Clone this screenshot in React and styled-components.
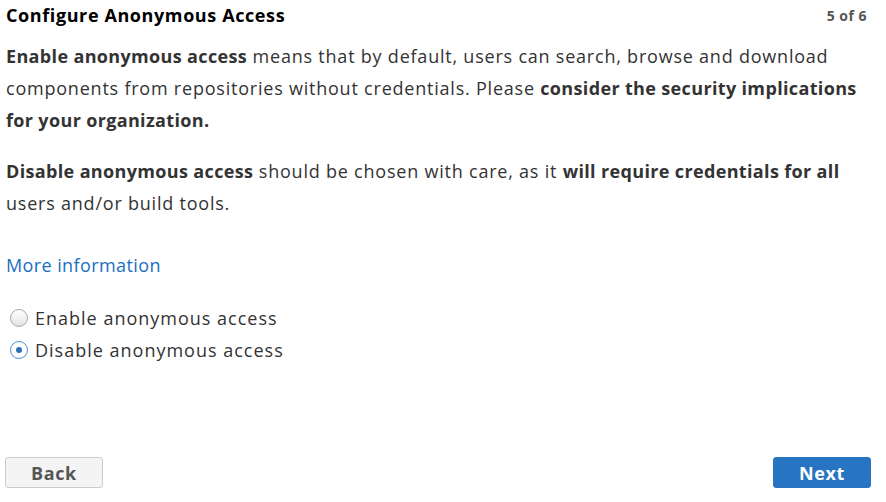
import React from "react";
import styled, { createGlobalStyle } from "styled-components";

const Global = createGlobalStyle`
  html, body { margin: 0; padding: 0; background: #fff; }
  body { font-family: "Open Sans", Lato, sans-serif; color: #333; }
`;

const Page = styled.div`
  height: 502px;
  box-sizing: border-box;
  padding: 3px 15px 14px 6px;
  display: flex;
  flex-direction: column;
`;

const Header = styled.div`
  display: flex;
  justify-content: space-between;
  align-items: center;
  height: 24px;
`;

const Title = styled.h1`
  margin: 0;
  font-size: 18px;
  font-weight: 700;
  letter-spacing: 0.6px;
  color: #000;
`;

const Step = styled.span`
  font-size: 14px;
  font-weight: 700;
  letter-spacing: 0.5px;
  color: #555;
  padding-right: 4px;
`;

const Para = styled.p`
  margin: ${(p) => p.$top}px 0 0;
  font-size: 18px;
  letter-spacing: 0.78px;
  line-height: 32px;
  color: #333;
  white-space: nowrap;
  b { font-weight: 700; letter-spacing: 0.35px; }
`;

const Link = styled.a`
  display: block;
  margin-top: 30px;
  font-size: 18px;
  letter-spacing: 0.4px;
  line-height: 32px;
  color: #1a6fbf;
  text-decoration: none;
`;

const Options = styled.div`
  margin-top: 21px;
  display: flex;
  flex-direction: column;
`;

const Option = styled.label`
  display: flex;
  align-items: center;
  height: 32px;
  font-size: 18px;
  letter-spacing: 1px;
  color: #333;
  gap: 7px;
`;

const Radio = styled.span`
  width: 18px;
  height: 18px;
  margin-left: 4px;
  border-radius: 50%;
  box-sizing: border-box;
  border: 1px solid ${(p) => (p.$checked ? "#4a90d9" : "#aaa")};
  background: ${(p) => (p.$checked ? "#fff" : "linear-gradient(#fff, #e3e3e3)")};
  display: flex;
  align-items: center;
  justify-content: center;
  &::after {
    content: "";
    width: 6px;
    height: 6px;
    border-radius: 50%;
    background: #2d6fb5;
    display: ${(p) => (p.$checked ? "block" : "none")};
  }
`;

const Footer = styled.div`
  margin-top: auto;
  display: flex;
  justify-content: space-between;
`;

const Button = styled.button`
  width: 98px;
  height: 31px;
  border-radius: 3px;
  font-family: inherit;
  font-size: 18px;
  letter-spacing: 0.6px;
  font-weight: 700;
  cursor: pointer;
  border: 1px solid ${(p) => (p.$primary ? "#2774c2" : "#ccc")};
  background: ${(p) => (p.$primary ? "#2774c2" : "#f4f4f4")};
  color: ${(p) => (p.$primary ? "#fff" : "#555")};
  margin-left: ${(p) => (p.$primary ? "0" : "-1px")};
`;

export default function App() {
  return (
    <>
      <Global />
      <Page>
        <Header>
          <Title>Configure Anonymous Access</Title>
          <Step>5 of 6</Step>
        </Header>
        <Para $top={13}>
          <b>Enable anonymous access</b> means that by default, users can search, browse and download
          <br />
          components from repositories without credentials. Please <b>consider the security implications</b>
          <br />
          <b>for your organization.</b>
        </Para>
        <Para $top={19}>
          <b>Disable anonymous access</b> should be chosen with care, as it <b>will require credentials for all</b>
          <br />
          users and/or build tools.
        </Para>
        <Link href="#">More information</Link>
        <Options>
          <Option>
            <Radio />
            Enable anonymous access
          </Option>
          <Option>
            <Radio $checked />
            Disable anonymous access
          </Option>
        </Options>
        <Footer>
          <Button>Back</Button>
          <Button $primary>Next</Button>
        </Footer>
      </Page>
    </>
  );
}
